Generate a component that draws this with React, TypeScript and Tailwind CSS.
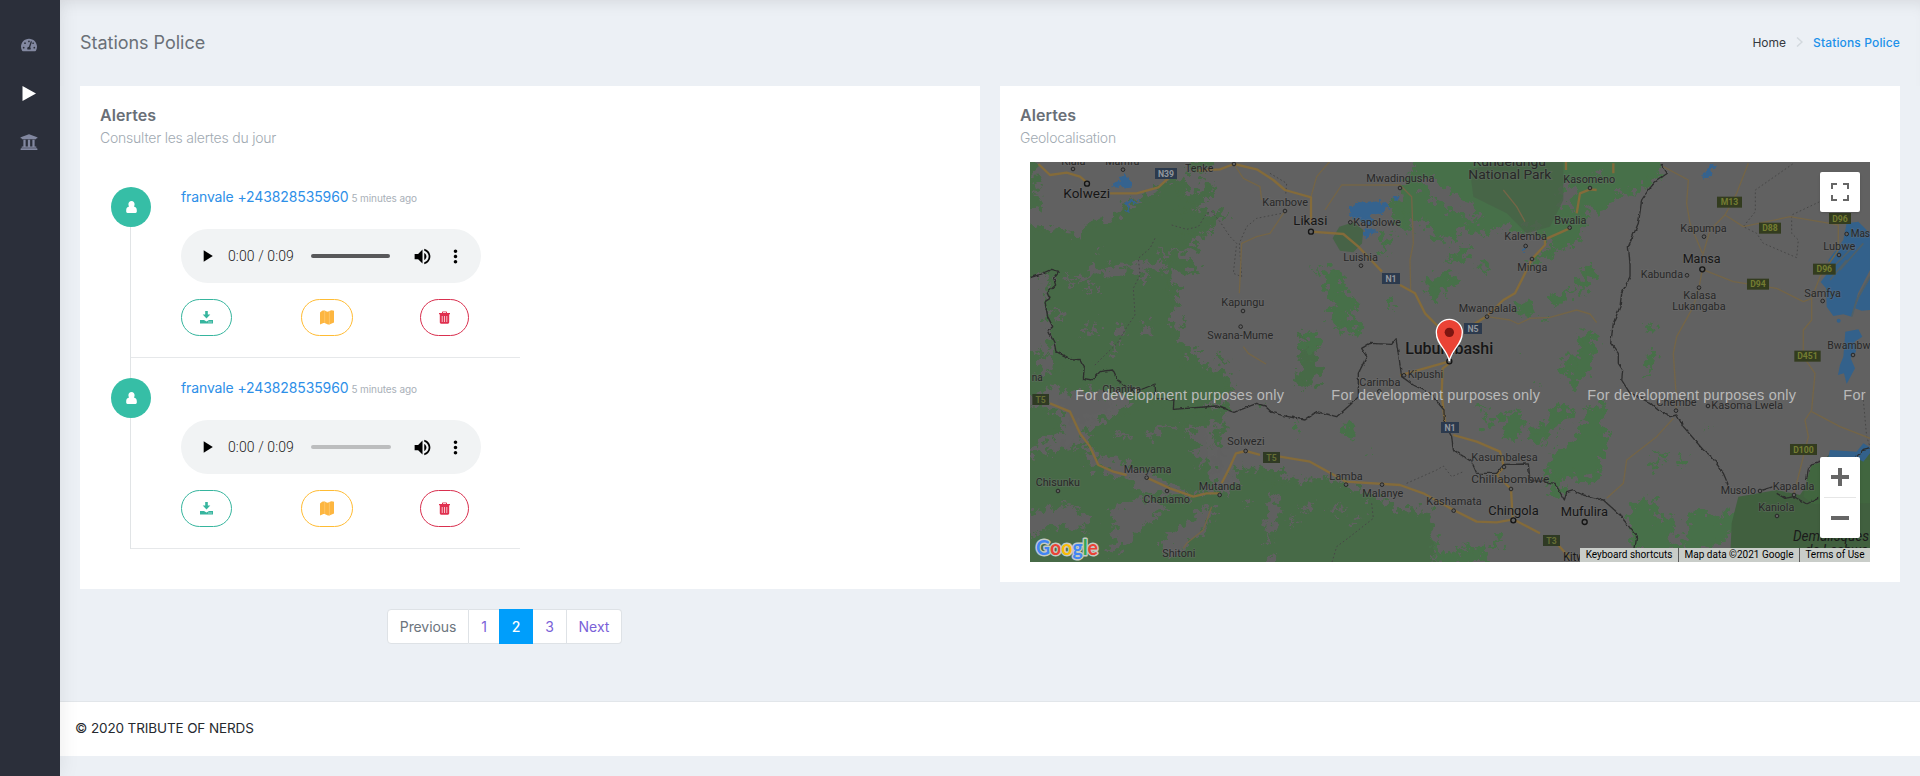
import React from "react";
import { FaTachometerAlt, FaUniversity } from "react-icons/fa";

type LabelData = [text: string, x: number, y: number, width: number, size?: number];

const labels: LabelData[] = [
  ["Kiala", 94, 14, 72],
  ["Mamfu", 226, 14, 102],
  ["Kolwezi", 100, 115, 140, 41],
  ["Tenke", 465, 36, 85],
  ["Kambove", 697, 138, 137],
  ["Likasi", 790, 196, 102, 41],
  ["Kapungu", 574, 439, 129],
  ["Swana-Mume", 532, 537, 198],
  ["na", 5, 664, 33],
  ["Chanika", 217, 698, 116],
  ["Solwezi", 592, 856, 112],
  ["Manyama", 281, 940, 143],
  ["Chisunku", 17, 979, 133],
  ["Chanamo", 340, 1030, 140],
  ["Mutanda", 506, 991, 127],
  ["Shitoni", 397, 1192, 99],
  ["Mwadingusha", 1009, 67, 204],
  ["Kundelungu", 1328, 18, 220, 39],
  ["National Park", 1315, 58, 249, 39],
  ["Kapolowe", 970, 199, 143],
  ["Luishia", 940, 304, 104],
  ["Kalemba", 1423, 241, 128],
  ["Minga", 1462, 332, 90],
  ["Mwangalala", 1286, 457, 175],
  ["Lubumbashi", 1126, 583, 264, 47],
  ["Kipushi", 1133, 655, 106],
  ["Carimba", 988, 679, 123],
  ["Kasumbalesa", 1324, 904, 199],
  ["Chililabombwe", 1324, 970, 234],
  ["Lamba", 898, 961, 100],
  ["Malanye", 997, 1011, 123],
  ["Kashamata", 1189, 1035, 166],
  ["Chingola", 1375, 1066, 151, 40],
  ["Kitwe", 1600, 1204, 80, 40],
  ["Kasomeno", 1600, 70, 156],
  ["Bwalia", 1573, 191, 96],
  ["Kapumpa", 1951, 217, 139],
  ["Mansa", 1958, 310, 114, 40],
  ["Kabunda", 1832, 355, 127],
  ["Kalasa", 1960, 418, 99],
  ["Lukangaba", 1927, 451, 160],
  ["Lubwe", 2380, 269, 96],
  ["Mas", 2462, 232, 58],
  ["Samfya", 2323, 410, 110],
  ["Bwambw", 2392, 568, 129],
  ["Chembe", 1879, 739, 121],
  ["Kasoma Lwela", 2044, 748, 215],
  ["Musolo", 2072, 1003, 106],
  ["Kapalala", 2228, 991, 125],
  ["Kaniola", 2185, 1054, 108],
  ["Mufulira", 1592, 1069, 142, 40],
];

const smallTowns: [number, number][] = [
  [129, 27], [279, 29], [765, 153], [639, 453], [632, 500], [647, 873], [350, 953], [84, 993],
  [411, 993], [569, 1005], [612, 12], [1110, 84], [961, 187], [993, 317], [1487, 258], [1506, 297],
  [1371, 470], [1122, 646], [1048, 694], [948, 974], [1056, 974], [1271, 1052], [1422, 921],
  [1443, 987], [1680, 84], [1619, 203], [2022, 230], [1971, 346], [2007, 383], [2427, 285],
  [2450, 222], [2378, 423], [2469, 585], [1938, 752], [2034, 738], [2190, 993], [2292, 1005], [2241, 1068],
];

const bigTowns: [number, number][] = [[171, 71], [843, 215], [2017, 328], [1450, 1081], [1664, 1086], [1258, 604]];

const shields: [string, number, number, number, "n" | "t" | "d"][] = [
  ["N39", 375, 24, 66, "n"],
  ["N1", 1056, 339, 54, "n"],
  ["N5", 1302, 489, 54, "n"],
  ["N1", 1233, 786, 54, "n"],
  ["T5", 7, 702, 50, "t"],
  ["T5", 699, 876, 51, "t"],
  ["T3", 1539, 1125, 51, "t"],
  ["M13", 2061, 110, 75, "d"],
  ["D88", 2187, 188, 66, "d"],
  ["D96", 2397, 159, 66, "d"],
  ["D96", 2349, 311, 68, "d"],
  ["D94", 2151, 356, 66, "d"],
  ["D451", 2293, 572, 79, "d"],
  ["D100", 2280, 852, 81, "d"],
];

const shieldColors = {
  n: ["#2c3a4d", "#92979d"],
  t: ["#2f3a24", "#646d34"],
  d: ["#333c1f", "#747c32"],
};

const GOOGLE: [string, string][] = [["G", "#4285f4"], ["o", "#ea4335"], ["o", "#fbbc05"], ["g", "#4285f4"], ["l", "#34a853"], ["e", "#ea4335"]];

function MapDrawing() {
  return (
    <svg className="absolute inset-0 h-full w-full" viewBox="0 0 840 400" fontFamily="Roboto, sans-serif">
      <defs>
        <filter id="ragged" x="-5%" y="-5%" width="110%" height="110%">
          <feTurbulence type="fractalNoise" baseFrequency="0.045" numOctaves="4" seed="7" result="n" />
          <feDisplacementMap in="SourceGraphic" in2="n" scale="75" xChannelSelector="R" yChannelSelector="G" />
        </filter>
        <filter id="ragged-fine" x="-5%" y="-5%" width="110%" height="110%">
          <feTurbulence type="fractalNoise" baseFrequency="0.08" numOctaves="3" seed="3" result="n" />
          <feDisplacementMap in="SourceGraphic" in2="n" scale="24" xChannelSelector="R" yChannelSelector="G" />
        </filter>
        <filter id="wavy" x="-5%" y="-5%" width="110%" height="110%">
          <feTurbulence type="fractalNoise" baseFrequency="0.06" numOctaves="2" seed="3" result="n" />
          <feDisplacementMap in="SourceGraphic" in2="n" scale="10" xChannelSelector="R" yChannelSelector="G" />
        </filter>
      </defs>
      <rect width="840" height="400" fill="#616161" />
      <g transform="translate(0 -2) scale(0.33333)">
        {/* Dense forest in the west */}
        <g fill="#476b46" stroke="#476b46" strokeWidth="14" strokeLinejoin="round" filter="url(#ragged)">
          <path d="M-40 -40H15V70L25 130L-40 160Z" />
          <path d="M-40 200L60 210L150 235L180 195L260 185L300 135L360 115L400 80L440 60L470 75L450 105L520 110L510 140L440 150L530 165L590 160L560 180L530 210L450 240L500 260L400 270L420 285L490 310L500 325L420 330L420 370L430 440L410 480L450 540L470 590L520 620L590 650L610 690L520 730L470 760L400 740L330 720L260 690L190 700L130 690L60 680L0 700L-40 640L0 570L90 610L70 560L60 470L50 400L80 340L-40 350Z" />
          <path d="M-40 740L60 745L100 790L60 830L-40 870Z" />
          <path d="M200 800L260 760L330 730L400 735L440 755L600 740L540 790L440 800L520 850L540 960L490 1000L420 960L350 930L240 890L190 870L170 820Z" />
          <path d="M-40 900L80 870L150 860L180 920L280 960L340 1000L500 1020L580 980L620 930L700 930L740 970L880 960L1000 1000L1090 1050L1200 1060L1200 1240H-40Z" />
          <path d="M520 70L550 75L545 110L515 110Z M520 195L545 205L540 215Z M485 5L540 -10L520 25L475 30Z" />
          <path d="M815 525L860 540L845 590L870 635L830 680L800 665L820 610Z M415 385L450 380L440 395Z M545 750L575 750L570 775Z M715 940L760 940L740 960Z" />
          <path d="M565 800L580 810L560 850L552 820Z M450 605L480 605L465 620Z M500 565L520 570M560 590L590 600M455 480L465 485M690 740L700 745" />
        </g>
        <g fill="#616161" filter="url(#ragged)">
          <path d="M140 340L230 320L330 305L420 315L400 330L280 335L180 350L150 370Z M320 320L355 350L330 365Z" />
          <path d="M170 370L200 380L180 410Z M100 340L140 370L120 380Z M60 450L110 460L90 480Z M330 490L365 505L350 530Z M180 485L210 495L190 530Z" />
          <path d="M30 590L75 600L60 650L20 640Z M150 500L170 510L150 530Z M240 550L270 560L250 580Z M250 490L290 495L270 520Z M190 270L210 265L205 285Z M385 270L440 275L400 290Z" />
          <path d="M80 740L170 690L260 710L220 760L150 790L110 770Z M60 870L120 845L170 830L150 860L60 885Z M350 820L400 790L430 800L350 835Z M250 815L310 825L280 838Z" />
          <path d="M190 880L270 900L370 950L300 955L220 935Z M490 790L525 810L530 900L512 940L500 870Z M560 850L590 860L560 960L545 940Z" />
          <path d="M-20 1060L90 1040L190 1075L160 1110L60 1100L-20 1130Z M230 1060L330 1010L410 1045L340 1100L260 1180L230 1170L265 1110Z M410 1130L490 1075L540 1035L555 1060L500 1130L450 1190L390 1180Z M100 1030L150 1040L120 1060Z" />
          <path d="M590 945L630 935L600 1000L575 995Z M725 1010L745 1020L745 1080L715 1160L708 1080Z M720 1185L745 1195L735 1230L705 1230Z M800 1045L860 1035L845 1055Z M890 1045L950 1035L920 1058Z M775 1075L815 1080L790 1095Z M960 1070L1000 1075L980 1090Z M640 1020L670 1030L650 1045Z" />
        </g>
        {/* Scattered forest in the centre and east */}
        <g fill="#477048" stroke="#477048" strokeWidth="7" strokeLinejoin="round" filter="url(#ragged)">
          <path d="M1130 60L1190 -30H1600L1910 -30L1880 50L1830 90L1760 110L1720 150L1660 140L1670 190L1640 240L1580 270L1560 230L1480 220L1430 180L1380 220L1290 200L1260 245L1220 230L1180 170L1130 200L1105 150Z" />
          <path d="M1080 130L1130 120L1120 180L1150 220L1100 200Z M1060 235L1095 225L1070 255L1060 290Z M1290 270L1330 265L1290 300L1250 305Z M1550 270L1580 275L1500 320Z" />
          <path d="M1210 350L1265 335L1270 370L1240 400L1210 420L1190 390Z" />
          <path d="M895 320L945 345L935 390L990 430L950 460L1000 500L960 520L900 480L915 420L885 370Z M850 520L870 560L835 590L810 540Z M1070 415L1095 430L1080 440Z M1340 315L1380 315L1370 335Z M850 325L870 328" />
          <path d="M1470 430L1500 435L1495 470L1465 455Z M1570 405L1620 385L1605 425L1565 435Z M1470 580L1475 585M1510 670L1520 675M1540 470L1560 480" />
          <path d="M945 790L970 805L970 830L940 820Z M1005 875L1020 875 M1340 745L1365 745L1360 755Z M1370 775L1395 785L1370 810Z M790 795L805 805L800 815Z" />
          <path d="M1650 520L1695 525L1690 580L1670 640L1635 680L1615 660L1650 590Z M1610 590L1645 600L1600 650Z" />
          <path d="M1420 765L1465 750L1480 800L1445 840L1420 820Z M1570 745L1610 725L1620 770L1580 800L1540 850Z M1505 805L1550 795L1540 835L1505 845Z" />
          <path d="M1690 740L1725 745L1715 800L1735 860L1705 900L1715 940L1680 960L1620 945L1570 975L1550 910L1570 880L1630 850L1650 800Z M1550 930L1590 960L1595 1010L1565 1005Z" />
          <path d="M1855 495L1870 490L1870 520L1855 518Z M1855 585L1870 580L1865 635L1855 635Z M1885 880L1910 885L1905 895Z M1945 893L1970 900L1960 915Z M1865 905L1875 920L1865 925Z M2030 798L2035 800" />
          <path d="M1800 1060L1850 1010L1880 1030L1870 1080L1930 1075L1940 1105L1910 1140L1955 1160L1980 1110L1970 1065L2030 1055L2070 1085L2090 1050L2130 1070L2105 1110L2070 1150L2000 1165L1900 1175L1850 1190L1810 1150Z" />
          <path d="M1210 1145L1250 1185L1210 1175Z M1305 1145L1330 1170L1320 1180Z M1385 1135L1415 1150L1380 1155Z M1680 320L1695 335L1655 400L1645 360Z M1605 255L1625 260L1610 270Z M1885 25L1895 40L1880 45Z" />
          <path d="M1210 1195L1350 1165L1370 1200L1240 1220Z" />
        </g>
        <g fill="#616161" filter="url(#ragged)">
          <path d="M1290 110L1210 60L1160 50L1200 110L1300 170L1350 180L1330 140Z M1470 220L1500 190L1550 210L1520 225Z M1610 70L1640 75L1620 150L1585 130Z M1690 30L1720 40L1700 60Z M1750 80L1780 70L1770 100Z" />
        </g>
        {/* Parks */}
        <path d="M1320 30L1450 -10H1600V120L1560 200L1490 220L1430 160L1330 110Z" fill="#476347" opacity="0.8" />
        <path d="M928 200L970 187L1000 210L996 250L970 277L930 272L908 235Z" fill="#476347" />
        <path d="M2125 1010L2240 990L2310 1005L2360 930L2400 880H2520V1210H2100L2105 1090Z" fill="#41603f" />
        <path d="M2330 960L2345 915L2400 900H2520V1030L2350 1032L2320 1010Z" fill="#41663f" />
        {/* Lakes */}
        <g fill="#35648f" filter="url(#ragged-fine)">
          <path d="M243 78L268 60L282 38L307 70L302 84Z M289 120L328 124L298 132L294 155L288 154Z" />
          <path d="M955 145L985 126L1010 128L1050 123L1080 138L1060 157L1020 167L1032 187L1010 202L993 182L963 172Z M1003 205L1042 213L1000 238Z M1086 105L1112 110L1095 127Z M1476 263L1491 260L1482 276Z" />
          <path d="M2020 45L2042 12L2054 16L2040 47L2022 60Z" />
        </g>
        <g fill="#33618b">
          <path d="M2372 366L2400 330L2395 300L2440 240L2450 190L2485 185L2520 220V330L2484 400L2465 470L2440 463L2410 468L2390 440L2388 385Z" />
          <path d="M2475 445L2488 410L2520 355V450L2495 452Z" />
          <path d="M2446 515L2485 508L2497 530L2474 545L2478 575L2462 595L2475 625L2450 672L2442 640L2424 645L2430 615L2440 590Z" />
          <path d="M2395 892L2400 870L2480 875L2500 850L2520 862V880L2500 905L2480 895Z" />
          <circle cx="2426" cy="482" r="6" />
        </g>
        <g stroke="#4f6068" strokeWidth="5" fill="none">
          <path d="M2520 350L2480 420L2465 470M2400 330L2470 260M2430 330L2500 250M2400 360L2450 300" />
        </g>
        {/* Tracks and minor boundaries */}
        <g fill="none" stroke="#464646" strokeWidth="3" strokeDasharray="5 7">
          <path d="M425 195L470 208L505 200L530 160L545 155L570 185L600 230L620 250L610 340L635 350L628 250L650 200L680 175L765 158" />
          <path d="M375 235L360 265L325 295L330 345L310 385L315 465L285 510L262 550L225 585L190 620" />
          <path d="M720 40L770 70L767 105M1130 970L1220 930L1240 918L1265 950L1300 935M1025 1030L1030 1075L960 1130L920 1160L905 1210" />
          <path d="M2288 12L2176 90V155L2140 200L2180 220L2200 250L2300 293L2305 240L2285 220V165L2380 120M2500 720L2510 830L2520 860" />
        </g>
        {/* Roads */}
        <g fill="none" stroke="#746547" strokeWidth="4" strokeLinejoin="round">
          <path d="M612 12L640 55L690 80L695 120M765 153L720 220L680 230L635 250L628 400M640 560L655 580L708 612M545 1040L520 1110L470 1150L460 1165" />
          <path d="M903 0L860 50L843 110M885 150L935 75H1110L1145 110L1150 250L1140 300L1142 390M1371 470L1440 480L1465 492L1500 475L1560 472L1640 450L1680 462L1700 488M1420 90L1460 140L1485 185" />
          <path d="M1900 20L1975 60L1970 130L1980 190L2017 280M2155 10L2120 100L2085 165L2040 210L2017 290M2085 165L2140 200L2280 170L2400 190L2425 195V270L2370 350L2345 415L2320 425L2240 385L2110 365L2017 328L2007 383L1990 440L1940 530L1930 580L1938 700V750M2345 415V480L2320 510L2320 590L2355 640L2345 750L2325 780L2335 830L2310 930L2292 1000M2345 755L2430 800L2520 835M1930 775L1880 830L1790 900L1780 970L1730 1015" />
        </g>
        <g fill="none" stroke="#846b3a" strokeWidth="7" strokeLinejoin="round">
          <path d="M25 12L60 45L110 38L150 50L171 68M240 100H320L385 82L420 50M500 32L570 28L612 12L680 28L730 60L765 90L843 112V190" />
          <path d="M60 730L120 755L150 820L180 860L205 915L250 935L290 945M350 953L420 985L490 1010L530 1000H569M575 970L600 920L618 880L647 873L690 885M750 890L840 905L948 965L1110 975L1180 1000L1271 1050L1340 1085L1400 1087L1450 1078L1530 1120M1580 1150L1620 1195" />
          <path d="M843 215L940 222L985 260L1056 335M1110 375L1155 400L1185 460L1220 495L1245 520M1258 604L1160 632L1110 646M1258 610L1238 625L1235 700L1245 790M1270 825L1340 845L1410 875L1422 921L1400 945L1443 987L1448 1075" />
          <path d="M1320 500L1371 468L1420 420L1455 400L1480 350L1506 297L1545 255V238L1619 205M1640 160L1650 100L1680 88L1700 90M1750 10V40M1608 0V30" />
        </g>
        {/* National borders */}
        <g fill="none" stroke="#2e2e2e" strokeWidth="4" strokeLinejoin="round" filter="url(#wavy)">
          <path d="M0 353L25 345L65 328L86 334L70 355L77 375L52 400L60 415L45 425L53 470L68 500L55 512L73 550L78 575L130 600L150 598L163 620L160 655L185 660L210 635L248 630L262 660L285 678L330 690L375 672L378 715L432 720L430 748L560 738L612 757L680 730L705 738L725 757L760 767L825 780L860 755L920 770L960 735L985 710L985 640L1010 590L995 565L1020 550L1085 553L1098 537L1108 600L1115 650L1150 675L1200 700L1242 750L1243 790L1265 830L1270 870L1325 905L1340 940H1400L1422 913L1495 912L1500 960L1575 970L1603 1020L1610 998L1630 992L1660 1005L1720 1020L1770 1065L1820 1130L1815 1165" />
          <path d="M1893 12L1912 40L1875 67L1855 90L1835 120L1831 150L1825 190L1810 225L1795 260L1800 310L1800 350L1775 400L1770 440L1750 490L1742 550L1765 580L1765 610L1778 630L1775 660L1800 700L1860 728L1890 755L1920 770L1940 765L1960 800L2020 870L2045 890L2080 940L2095 975" />
          <path d="M2190 993L2230 980M2240 1000L2265 1015L2292 1010L2330 1032L2365 1015M2330 960L2335 925L2350 910L2395 895M2480 890L2500 868L2520 863" />
        </g>
        {/* Towns */}
        <g fill="#616161" stroke="#262626" strokeWidth="3">
          {smallTowns.map(([x, y]) => <circle key={`${x}-${y}`} cx={x} cy={y} r="5.5" />)}
        </g>
        <g fill="#616161" stroke="#151515" strokeWidth="4">
          {bigTowns.map(([x, y]) => <circle key={`${x}-${y}`} cx={x} cy={y} r="7.5" />)}
        </g>
        {shields.map(([t, x, y, w, kind]) => (
          <g key={`${x}-${y}`}>
            <rect x={x} y={y} width={w} height="33" fill={shieldColors[kind][0]} />
            <text x={x + w / 2} y={y + 26} textAnchor="middle" fontSize="26" fontWeight="700" fill={shieldColors[kind][1]}>{t}</text>
          </g>
        ))}
        {labels.map(([t, x, y, w, size = 34]) => (
          <text
            key={`${x}-${y}`}
            x={x}
            y={y}
            fontSize={size}
            textLength={w}
            lengthAdjust="spacingAndGlyphs"
            fill={size >= 40 ? "#161616" : "#282828"}
            fontWeight={size > 42 ? 500 : 400}
            stroke="#707070"
            strokeOpacity="0.4"
            strokeWidth="5"
            paintOrder="stroke"
          >
            {t}
          </text>
        ))}
        <text x="2289" y="1144" fontSize="41" fontStyle="italic" fill="#1b1b1b" textLength="228" lengthAdjust="spacingAndGlyphs">Demalisques</text>
        <text x="2325" y="1184" fontSize="41" fontStyle="italic" fill="#1b1b1b">de Leshwe</text>
        {/* Pin */}
        <path d="M1258 603C1250 565 1219 555 1219 517A39 39 0 0 1 1297 517C1297 555 1266 565 1258 603Z" fill="#ea4335" stroke="#fff" strokeWidth="4" />
        <circle cx="1258" cy="517" r="14" fill="#7d1511" />
        <g fill="#b9b9b9" fontSize="43.5" fontFamily="'Liberation Sans', sans-serif">
          {[136, 904, 1672, 2440].map((x) => <text key={x} x={x} y="721" textLength="626">For development purposes only</text>)}
        </g>
      </g>
    </svg>
  );
}

function MapPanel() {
  return (
    <div className="relative h-[400px] w-[840px] overflow-hidden">
      <MapDrawing />
      <button aria-label="Fullscreen" className="absolute top-[10px] right-[10px] flex h-10 w-10 items-center justify-center rounded-[2px] bg-white shadow">
        <svg className="h-[18px] w-[18px]" viewBox="0 0 18 18" fill="none" stroke="#666" strokeWidth="2">
          <path d="M1 6V1H6M12 1H17V6M17 12V17H12M6 17H1V12" />
        </svg>
      </button>
      <div className="absolute right-[10px] bottom-6 flex h-[81px] w-10 flex-col items-center rounded-[2px] bg-white shadow">
        <button aria-label="Zoom in" className="flex h-10 w-10 items-center justify-center">
          <svg className="h-[18px] w-[18px]" viewBox="0 0 18 18" fill="#666"><path d="M7 0H11V7H18V11H11V18H7V11H0V7H7Z" /></svg>
        </button>
        <span className="h-px w-8 bg-[#e6e6e6]" />
        <button aria-label="Zoom out" className="flex h-10 w-10 items-center justify-center">
          <svg className="h-[18px] w-[18px]" viewBox="0 0 18 18" fill="#666"><path d="M0 7H18V11H0Z" /></svg>
        </button>
      </div>
      <svg className="absolute bottom-0 left-[5px] h-[26px] w-[68px] overflow-visible" viewBox="0 0 68 26">
        <text x="1" y="19" fontFamily="Lato, sans-serif" fontWeight="700" fontSize="21.5" textLength="62" lengthAdjust="spacingAndGlyphs" stroke="#c4cac4" strokeWidth="3" strokeLinejoin="round" paintOrder="stroke">
          {GOOGLE.map(([c, fill], i) => <tspan key={i} fill={fill}>{c}</tspan>)}
        </text>
      </svg>
      <div className="absolute right-0 bottom-0 flex h-[14px] items-center bg-[#c9cdc9] font-[Roboto,sans-serif] text-[10px] leading-[14px] whitespace-nowrap text-black">
        <span className="w-[98px] text-center">Keyboard shortcuts</span>
        <span className="h-full w-px bg-[#5c5c5c]" />
        <span className="w-[120px] text-center">Map data ©2021 Google</span>
        <span className="h-full w-px bg-[#5c5c5c]" />
        <span className="w-[70px] text-center">Terms of Use</span>
      </div>
    </div>
  );
}

function PersonIcon() {
  return (
    <svg className="h-3 w-[11px]" viewBox="0 0 11 12" fill="#fff">
      <path d="M5.5 0C7.4 0 8.6 1.4 8.6 3.2C8.6 4.2 8.3 5 7.9 5.600C9.800 6 10.800 7.200 10.800 9.2V10.6C10.8 11.5 10.3 12 9.5 12H1.5C.7 12 .2 11.5 .2 10.6V9.2C.2 7.2 1.200 6 3.100 5.600C2.700 5 2.4 4.200 2.4 3.2C2.4 1.4 3.6 0 5.5 0Z" />
    </svg>
  );
}

function AudioPlayer({ loaded }: { loaded: boolean }) {
  return (
    <div className="flex h-[54px] w-[300px] items-center rounded-[27px] bg-[#f1f3f4] pl-4">
      <svg className="h-5 w-5 shrink-0" viewBox="0 0 24 24"><path d="M8 5v14l11-7z" /></svg>
      <span className="ml-[11px] w-[83px] shrink-0 font-[Roboto,sans-serif] text-[14px] font-light tracking-[0.1px] whitespace-nowrap text-[#1c1c1c]">0:00 / 0:09</span>
      <span className={loaded ? "h-1 w-[79px] rounded-full bg-[#58585a]" : "h-1 w-20 rounded-full bg-[#bcbdbe]"} />
      <svg className={loaded ? "ml-[22px] h-[21px] w-[21px] shrink-0" : "ml-[21px] h-[21px] w-[21px] shrink-0"} viewBox="0 0 24 24">
        <path d="M3 9v6h4l5 5V4L7 9H3zm13.5 3c0-1.77-1.02-3.29-2.5-4.03v8.05c1.48-.73 2.5-2.25 2.5-4.02zM14 3.23v2.06c2.89.86 5 3.54 5 6.71s-2.11 5.85-5 6.71v2.06c4.01-.91 7-4.49 7-8.77s-2.99-7.86-7-8.77z" />
      </svg>
      <svg className="ml-3 h-[21px] w-[21px] shrink-0" viewBox="0 0 24 24">
        <path d="M12 8c1.1 0 2-.9 2-2s-.9-2-2-2-2 .9-2 2 .9 2 2 2zm0 2c-1.100 0-2 .9-2 2s.9 2 2 2 2-.9 2-2-.9-2-2-2zm0 6c-1.100 0-2 .9-2 2s.9 2 2 2 2-.9 2-2-.9-2-2-2z" />
      </svg>
    </div>
  );
}

function AlertItem({ first, loaded }: { first: boolean; loaded: boolean }) {
  return (
    <li className={first ? "flex h-[151px] w-[389px] items-start border-b border-[#e6e8ea]" : "flex h-[191px] w-[389px] items-start border-b border-[#e6e8ea]"}>
      <span className={first ? "-mt-5 -ml-5 flex h-10 w-10 shrink-0 items-center justify-center rounded-full bg-[#36bea6]" : "mt-5 -ml-5 flex h-10 w-10 shrink-0 items-center justify-center rounded-full bg-[#36bea6]"}>
        <PersonIcon />
      </span>
      <div className={first ? "-mt-[21px] ml-[30px]" : "ml-[30px] pt-[19px]"}>
        <p className="flex h-[21px] items-baseline gap-[3px] whitespace-nowrap">
          <a className="text-[14px] leading-[21px] tracking-[-0.12px] text-[#2d8fe8]">franvale +243828535960</a>
          <span className="text-[10px] tracking-[-0.1px] text-[#a9b0b8]">5 minutes ago</span>
        </p>
        <div className="mt-[22px]"><AudioPlayer loaded={loaded} /></div>
        <div className="mt-4 flex">
          <button aria-label="Download" className="mr-[69px] flex h-[37px] w-[51px] items-center justify-center rounded-full border border-[#36b59e]">
            <svg className="h-[13px] w-[13px]" viewBox="0 0 13 13" fill="#36b59e">
              <path d="M5.200 0H7.800V3.500H10.300L6.500 7.600L2.700 3.500H5.200ZM0 9H4L6.500 10.400L9 9H13V12.500H0ZM8.500 10.600V11.500H9.500V10.600ZM10.500 10.600V11.500H11.500V10.600Z" fillRule="evenodd" />
            </svg>
          </button>
          <button aria-label="Locate" className="mr-[67px] flex h-[37px] w-[52px] items-center justify-center rounded-full border border-[#ffbc34]">
            <svg className="h-[15px] w-[14px]" viewBox="0 0 14 15" fill="#fdb640">
              <path d="M0 2.500C1.500 .8 3 .2 4.700 .6C6.500 2 7.800 2 9.400 1C11 0 12.500 .2 14 .8V12.500C12.500 13.200 11 13.500 9.400 14.600C7.800 14.800 6.200 13.600 4.700 13C3 13 1.500 13.600 0 14.500Z" />
              <path d="M4.700 .6V13M9.400 1V14.600" stroke="#ffd083" strokeWidth=".6" />
            </svg>
          </button>
          <button aria-label="Delete" className="flex h-[37px] w-[49px] items-center justify-center rounded-full border border-[#d9304f]">
            <svg className="h-[13px] w-[11px]" viewBox="0 0 11 13" fill="#e0304f">
              <path d="M3 2V1.400C3 .7 3.500 .4 4 .4H7C7.500 .4 8 .7 8 1.400V2H11V3.300H10.200V11.300C10.200 12.200 9.700 12.700 8.900 12.700H2.100C1.300 12.700 .8 12.200 .8 11.300V3.300H0V2ZM4 2H7V1.300H4ZM2.800 5V11H3.500V5ZM5.150 5V11H5.850V5ZM7.500 5V11H8.200V5Z" fillRule="evenodd" />
            </svg>
          </button>
        </div>
      </div>
    </li>
  );
}

export default function App() {
  return (
    <div className="flex h-[776px] w-[1920px] overflow-hidden bg-[#ecf0f5] font-[Inter,sans-serif] text-[14px]">
      <aside className="relative z-10 flex w-[60px] shrink-0 flex-col items-center bg-[#2b2f3a] pt-[37px] text-[#8288a0] shadow-[1px_0_20px_rgba(0,0,0,0.08)]">
        <FaTachometerAlt className="ml-[-2px] h-4 w-4" />
        <svg className="mt-[33px] ml-[-2px] h-[15px] w-[14px]" viewBox="0 0 14 15" fill="#fff"><path d="M.5 0L14 7.500L.5 15Z" /></svg>
        <FaUniversity className="mt-[32px] ml-[-3px] h-[18px] w-[18px]" />
      </aside>
      <div className="flex min-w-0 flex-1 flex-col">
        <header className="flex h-[86px] shrink-0 items-center justify-between px-5 shadow-[inset_0_12px_16px_-10px_rgba(0,0,0,0.1)]">
          <h1 className="mb-px text-[18px] tracking-[-0.03px] text-[#6a7078]">Stations Police</h1>
          <nav className="flex items-center text-[12px]">
            <a className="text-[#35393e]">Home</a>
            <svg className="mx-[10px] mb-[3px] h-[10px] w-[7px]" viewBox="0 0 7 10" fill="none" stroke="#d3d9de" strokeWidth="1.500"><path d="M1 0.500L6 5L1 9.500" /></svg>
            <a className="font-medium tracking-[0.14px] text-[#2091ea]">Stations Police</a>
          </nav>
        </header>
        <main className="flex h-[615px] shrink-0 items-start gap-5 px-5">
          <div className="flex w-[900px] flex-col">
            <section className="h-[503px] bg-white px-5 pt-[19px]">
              <h2 className="text-[16px] leading-5 font-semibold tracking-[0.05px] text-[#696f77]">Alertes</h2>
              <p className="mt-[3px] text-[14px] leading-5 font-light tracking-[-0.22px] text-[#a1aab2]">Consulter les alertes du jour</p>
              <ul className="mt-[59px] ml-[30px] w-[390px] border-l border-[#e1e4e6]">
                <AlertItem first loaded />
                <AlertItem first={false} loaded={false} />
              </ul>
            </section>
            <nav className="mt-5 ml-[307px] flex h-[35px] items-stretch">
              <a className="flex w-[82px] items-center justify-center rounded-l border border-[#dee2e6] bg-white tracking-[-0.1px] text-[#6c757d]">Previous</a>
              <a className="flex w-[30px] items-center justify-center border-y border-[#dee2e6] bg-white text-[#7a62d8]">1</a>
              <a className="flex w-[34px] items-center justify-center bg-[#009efb] font-medium text-white">2</a>
              <a className="flex w-[34px] items-center justify-center border-y border-r border-[#dee2e6] bg-white text-[#7a62d8]">3</a>
              <a className="flex w-[55px] items-center justify-center rounded-r border-y border-r border-[#dee2e6] bg-white text-[#7a62d8]">Next</a>
            </nav>
          </div>
          <section className="h-[496px] w-[900px] bg-white pt-[19px]">
            <h2 className="ml-5 text-[16px] leading-5 font-semibold tracking-[0.05px] text-[#696f77]">Alertes</h2>
            <p className="mt-[3px] ml-5 text-[14px] leading-5 font-light tracking-[-0.24px] text-[#a1aab2]">Geolocalisation</p>
            <div className="mt-[14px] ml-[30px]"><MapPanel /></div>
          </section>
        </main>
        <footer className="flex h-[55px] shrink-0 items-center border-t border-[#e2e6ea] bg-white pb-[2px] pl-[15px] text-[13.500px] tracking-[-0.12px] text-[#25292e]">© 2020 TRIBUTE OF NERDS</footer>
      </div>
    </div>
  );
}
